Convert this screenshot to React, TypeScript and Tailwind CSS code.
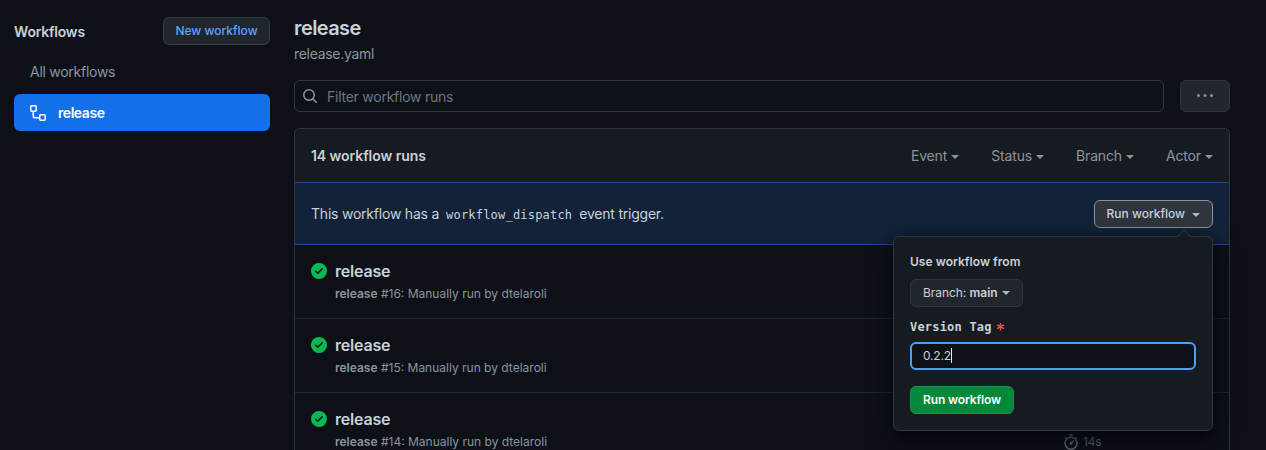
import type { ReactNode } from "react";

const paths = {
  workflow:
    "M0 1.75C0 .784.784 0 1.75 0h3.5C6.216 0 7 .784 7 1.75v3.5A1.75 1.75 0 0 1 5.25 7H4v4a1 1 0 0 0 1 1h4v-1.25C9 9.784 9.784 9 10.75 9h3.5c.966 0 1.75.784 1.75 1.75v3.5A1.75 1.75 0 0 1 14.25 16h-3.5A1.75 1.75 0 0 1 9 14.25v-.75H5A2.5 2.5 0 0 1 2.5 11V7h-.75A1.75 1.75 0 0 1 0 5.25Zm1.75-.25a.25.25 0 0 0-.25.25v3.5c0 .138.112.25.25.25h3.5a.25.25 0 0 0 .25-.25v-3.5a.25.25 0 0 0-.25-.25Zm9 9a.25.25 0 0 0-.25.25v3.5c0 .138.112.25.25.25h3.5a.25.25 0 0 0 .25-.25v-3.5a.25.25 0 0 0-.25-.25Z",
  check:
    "M8 16A8 8 0 1 1 8 0a8 8 0 0 1 0 16Zm3.78-9.72a.751.751 0 0 0-.018-1.042.751.751 0 0 0-1.042-.018L6.75 9.19 5.28 7.72a.751.751 0 0 0-1.042.018.751.751 0 0 0-.018 1.042l2 2a.75.75 0 0 0 1.06 0Z",
  search:
    "M10.68 11.74a6 6 0 0 1-7.922-8.982 6 6 0 0 1 8.982 7.922l3.04 3.04a.749.749 0 0 1-.326 1.275.749.749 0 0 1-.734-.215ZM11.5 7a4.499 4.499 0 1 0-8.997 0A4.499 4.499 0 0 0 11.5 7Z",
  stopwatch:
    "M5.75.75A.75.75 0 0 1 6.5 0h3a.75.75 0 0 1 0 1.5h-.75v1l-.001.041a6.724 6.724 0 0 1 3.464 1.435l.007-.006.75-.75a.749.749 0 0 1 1.275.326.749.749 0 0 1-.215.734l-.75.75-.006.007a6.75 6.75 0 1 1-10.548 0L2.72 5.03l-.75-.75a.751.751 0 0 1 .018-1.042.751.751 0 0 1 1.042-.018l.75.75.007.006A6.72 6.72 0 0 1 7.25 2.541V1.5H6.5a.75.75 0 0 1-.75-.75ZM8 14.5a5.25 5.25 0 1 0-.001-10.501A5.25 5.25 0 0 0 8 14.5Zm.389-6.7 1.33-1.33a.75.75 0 1 1 1.061 1.06L9.45 8.861A1.503 1.503 0 0 1 8 10.75a1.499 1.499 0 1 1 .389-2.95Z",
};

function Icon({ name, className }: { name: keyof typeof paths; className?: string }) {
  return (
    <svg viewBox="0 0 16 16" fill="currentColor" className={`size-4 shrink-0 ${className ?? ""}`}>
      <path d={paths[name]} />
    </svg>
  );
}

function Caret({ className }: { className?: string }) {
  return (
    <svg viewBox="0 0 8 4" fill="currentColor" className={`h-1 w-2 shrink-0 ${className ?? ""}`}>
      <path d="M0 0h8L4 4Z" />
    </svg>
  );
}

function Filter({ children }: { children: ReactNode }) {
  return (
    <button className="flex items-center gap-1 tracking-[-0.15px] text-[#8b949e]">
      {children}
      <Caret className="mt-[2px]" />
    </button>
  );
}

function Sidebar() {
  return (
    <aside className="w-64 shrink-0">
      <div className="flex h-7 items-center justify-between">
        <h2 className="pt-0.5 font-semibold tracking-[-0.2px]">Workflows</h2>
        <button className="h-7 w-[107px] rounded-md border border-[#363b42] bg-[#21262d] text-xs font-medium text-[#58a6ff]">
          New workflow
        </button>
      </div>
      <nav className="mt-4">
        <a className="flex h-[33px] items-start pl-4 pt-px leading-5 tracking-[-0.27px] text-[#8b949e]">All workflows</a>
        <a className="flex h-[37px] items-center gap-3 rounded-md bg-[#1370e9] pl-4 font-semibold tracking-[-0.45px] text-white">
          <Icon name="workflow" />
          release
        </a>
      </nav>
    </aside>
  );
}

function RunForm() {
  return (
    <div className="absolute right-0 top-9 z-10 flex h-[195px] w-80 flex-col items-start rounded-md border border-[#30363d] bg-[#161b22] px-4 pt-4 text-xs shadow-[0_8px_24px_#010409]">
      <svg viewBox="0 0 16 8" className="absolute -top-[7px] right-5 h-2 w-4">
        <path d="M0 8 8 0l8 8Z" fill="#161b22" />
        <path d="M1 7 8 .5 15 7" fill="none" stroke="#30363d" />
      </svg>
      <p className="h-[18px] font-semibold leading-[18px] tracking-[0.04px]">Use workflow from</p>
      <button className="mt-2 flex h-7 w-[113px] items-center rounded-md border border-[#30363d] bg-[#21262d] pl-3">
        <span className="tracking-[-0.05px]">
          Branch: <span className="font-semibold">main</span>
        </span>
        <Caret className="ml-1 text-[#b1bac4]" />
      </button>
      <label className="mt-[11px] flex h-[18px] items-center font-['DejaVu_Sans_Mono',monospace] font-bold tracking-[0.2px]">
        Version Tag
        <span className="ml-1 h-[18px] pt-[3px] text-[15px] leading-[18px] text-[#f85149]">*</span>
      </label>
      <div className="mt-[6px] flex h-7 w-[286px] items-center rounded-md border-2 border-[#4aa0f8] bg-[#0d1117] pl-[11px] tracking-[-0.2px]">
        0.2.2
        <span className="h-[15px] w-px bg-[#e6edf3]" />
      </div>
      <button className="mt-4 h-7 w-[104px] rounded-md border border-[#1a9448] bg-[#03873a] font-semibold tracking-[-0.12px] text-white">
        Run workflow
      </button>
    </div>
  );
}

function RunRow({ id }: { id: number }) {
  return (
    <div className="flex h-[74px] items-start border-b border-[#21262d] pl-4 pt-[15px]">
      <Icon name="check" className="mt-[3px] text-[#09b755]" />
      <div className="ml-2 w-[728px]">
        <h3 className="text-base font-semibold leading-[22px] tracking-[-0.2px]">release</h3>
        <p className="mt-[3px] text-xs leading-[18px] text-[#8b949e]">
          <span className="font-semibold">release</span> #{id}: Manually run by dtelaroli
        </p>
      </div>
      <div className="mt-[25px] flex h-[18px] items-center gap-1 text-xs tracking-[-0.2px] text-[#6e7681]">
        <Icon name="stopwatch" />
        14s
      </div>
    </div>
  );
}

export default function App() {
  return (
    <div className="flex h-[450px] w-[1266px] gap-6 overflow-hidden bg-[#0d1117] pl-[14px] pt-[17px] font-['Inter',sans-serif] text-sm text-[#c9d1d9]">
      <Sidebar />
      <main className="w-[936px] shrink-0">
        <h1 className="h-[22px] text-xl font-semibold leading-[22px] tracking-[-0.6px]">release</h1>
        <p className="mt-[5px] h-5 leading-5 tracking-[-0.3px] text-[#8b949e]">release.yaml</p>
        <div className="mt-4 flex gap-4">
          <div className="flex h-8 flex-1 items-center gap-[9px] rounded-md border border-[#30363d] pl-[7px] tracking-[-0.25px] text-[#6e7681]">
            <Icon name="search" className="text-[#8b949e]" />
            <span className="pt-0.5">Filter workflow runs</span>
          </div>
          <button className="flex h-8 w-[50px] items-center justify-center rounded-md border border-[#30363d] bg-[#21262d] text-[#8b949e]">
            <svg viewBox="0 0 16 16" className="size-4" fill="currentColor">
              <circle cx="1.5" cy="7.5" r="1.5" />
              <circle cx="8" cy="7.5" r="1.5" />
              <circle cx="14.5" cy="7.5" r="1.5" />
            </svg>
          </button>
        </div>
        <section className="mt-4 rounded-t-md border border-b-0 border-[#30363d]">
          <header className="flex h-[53px] items-center justify-between rounded-t-md bg-[#161b22] px-4">
            <h2 className="font-semibold tracking-[-0.05px]">14 workflow runs</h2>
            <div className="flex gap-8">
              <Filter>Event</Filter>
              <Filter>Status</Filter>
              <Filter>Branch</Filter>
              <Filter>Actor</Filter>
            </div>
          </header>
          <div className="flex h-[63px] items-center justify-between border-y border-[#1b4b8b] bg-[#122339] px-4">
            <p className="tracking-[-0.22px]">
              This workflow has a
              <code className="mx-[7px] font-['DejaVu_Sans_Mono',monospace] text-xs tracking-[0.2px]">workflow_dispatch</code>
              event trigger.
            </p>
            <div className="relative">
              <button className="flex h-7 w-[119px] items-center rounded-md border border-[#8b949e] bg-[#30363d] pl-[11.5px] text-xs font-medium">
                Run workflow
                <Caret className="ml-[7px] mt-[2px] text-[#b1bac4]" />
              </button>
              <RunForm />
            </div>
          </div>
          <RunRow id={16} />
          <RunRow id={15} />
          <RunRow id={14} />
        </section>
      </main>
    </div>
  );
}
